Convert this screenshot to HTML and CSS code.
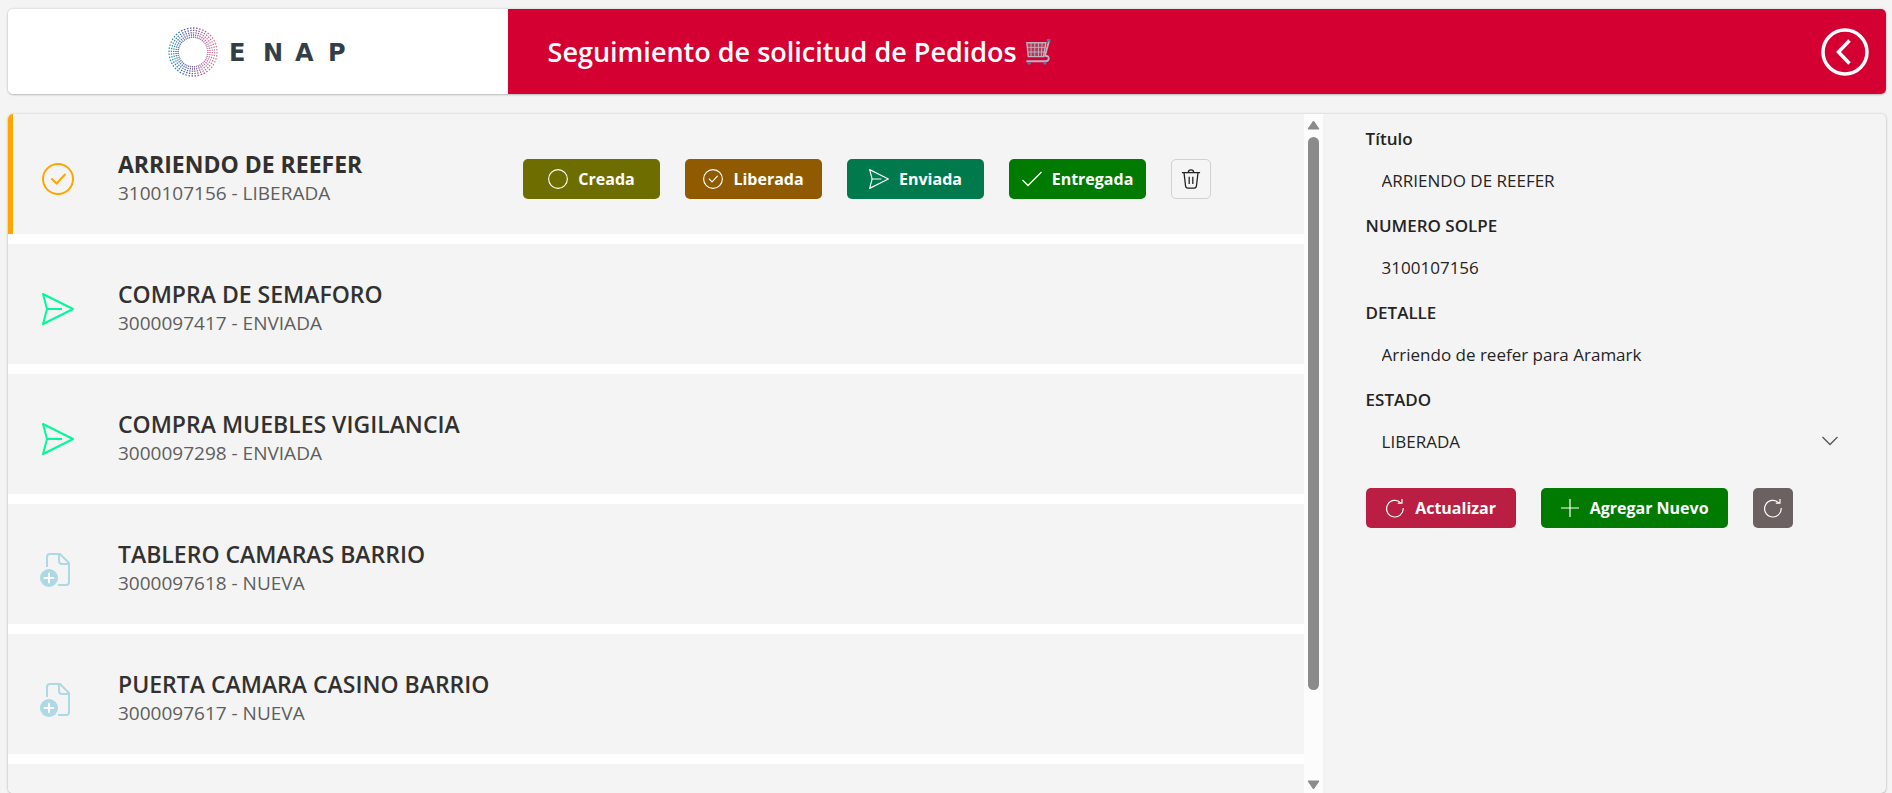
FILE: index.html
```html
<!DOCTYPE html>
<html lang="es">
<head>
<meta charset="utf-8">
<title>Seguimiento de solicitud de Pedidos</title>
<link rel="stylesheet" href="styles.css">
</head>
<body>
<svg class="sprite" aria-hidden="true">
  <symbol id="check-circle" viewBox="0 0 32 32"><g fill="none" stroke="currentColor" stroke-width="var(--sw)"><circle cx="16" cy="16" r="15"/><path d="M10 16l4.500 4.500L23 11.500" stroke-linecap="round" stroke-linejoin="round"/></g></symbol>
  <symbol id="send" viewBox="0 0 32 32"><path d="M1 1L31 16L1 31L5 16ZM5 16H20" fill="none" stroke="currentColor" stroke-width="var(--sw)" stroke-linejoin="round"/></symbol>
  <symbol id="file-add" viewBox="0 0 32 36"><g fill="none" stroke="currentColor" stroke-width="2"><path d="M5 16V6Q5 3 8 3H18L27 12V31Q27 34 24 34H16"/><path d="M17 3V10Q17 13 20 13H27"/></g><circle cx="7" cy="27" r="9" fill="currentColor"/><path d="M7 22.500V31.500M2.500 27H11.500" stroke="#fff" stroke-width="2" stroke-linecap="round"/></symbol>
  <symbol id="refresh" viewBox="0 0 20 20"><g fill="none" stroke="currentColor" stroke-width="1.200"><path d="M15.800 4.800A8.300 8.300 0 1 0 18.200 10"/><path d="M12.800 5.200H17V1"/></g></symbol>
</svg>

<header class="topbar">
  <div class="brand">
    <svg class="logo" viewBox="0 0 181 52" role="img" aria-label="ENAP">
      <defs>
        <linearGradient id="ring" gradientUnits="userSpaceOnUse" x1="0" y1="0" x2="51" y2="0">
          <stop offset="0" stop-color="#2fa9a6"/><stop offset=".25" stop-color="#3f6fa8"/><stop offset=".5" stop-color="#6b5597"/><stop offset=".75" stop-color="#b9689f"/><stop offset="1" stop-color="#e08098"/>
        </linearGradient>
      </defs>
      <g fill="none" stroke="url(#ring)" stroke-width="1.300" stroke-dasharray="1 1">
        <circle cx="26" cy="26" r="14.800" pathLength="96" stroke-width="1.600"/>
        <circle cx="26" cy="26" r="17" pathLength="96" stroke-width="1.500"/>
        <circle cx="26" cy="26" r="19.300" pathLength="96"/>
        <circle cx="26" cy="26" r="21.600" pathLength="96"/>
        <circle cx="26" cy="26" r="24" pathLength="96"/>
      </g>
      <text class="logo-text" x="62 96 128 161" y="35">ENAP</text>
    </svg>
  </div>
  <div class="banner">
    <h1>Seguimiento de solicitud de Pedidos</h1>
    <svg class="cart" viewBox="0 0 28 28" fill="none" aria-hidden="true">
      <path d="M2 4H22.500L20 19H3.500Z" fill="#b43a56" stroke="#b9b4c0" stroke-width="1.500"/>
      <path d="M6.500 4V19M10.500 4V19M14.500 4V19M18.500 4L17.500 19M2.500 9H22M3 14H21" stroke="#b9b4c0"/>
      <path d="M26 1.500L21.500 18Q26 18 25.500 21.500Q25 24 22 24H1.500" stroke="#b9b4c0" stroke-width="2"/>
      <path d="M23.500 1.500H27.500" stroke="#3a7fc4" stroke-width="3"/><circle cx="4.500" cy="26" r="1.600" fill="#3a7fc4"/><circle cx="21.500" cy="26" r="1.600" fill="#3a7fc4"/>
    </svg>
    <button class="back" type="button" aria-label="Volver">
      <svg viewBox="0 0 48 48" fill="none" stroke="#fff" stroke-width="3.500"><circle cx="24" cy="24" r="22"/><path d="M28.500 12.500L17.500 24L28.500 35.500"/></svg>
    </button>
  </div>
</header>

<main class="panel">
  <section class="list-wrap">
    <ul class="list">
      <li class="item selected">
        <svg class="state liberada"><use href="#check-circle"/></svg>
        <div class="text"><h2>ARRIENDO DE REEFER</h2><p>3100107156 - LIBERADA</p></div>
        <div class="actions">
          <button class="btn olive" type="button"><svg class="ico" viewBox="0 0 32 32"><circle cx="16" cy="16" r="15" fill="none" stroke="currentColor" stroke-width="1.800"/></svg>Creada</button>
          <button class="btn brown" type="button"><svg class="ico"><use href="#check-circle"/></svg>Liberada</button>
          <button class="btn teal" type="button"><svg class="ico"><use href="#send"/></svg>Enviada</button>
          <button class="btn green" type="button"><svg class="ico" viewBox="0 0 20 20"><path d="M.5 11L6 16.500L19.500 3" fill="none" stroke="currentColor" stroke-width="1.300"/></svg>Entregada</button>
          <button class="btn trash" type="button" aria-label="Eliminar"><svg class="ico" viewBox="0 0 20 22" fill="none" stroke="#222" stroke-width="1.400"><path d="M0 4H20M7 4Q7 1 10 1T13 4M2.300 4L4 18.500Q4.200 21 6.500 21H13.500Q15.800 21 16 18.500L17.700 4M8 8.500V16.500M12 8.500V16.500"/></svg></button>
        </div>
      </li>
      <li class="item">
        <svg class="state enviada"><use href="#send"/></svg>
        <div class="text"><h2>COMPRA DE SEMAFORO</h2><p>3000097417 - ENVIADA</p></div>
      </li>
      <li class="item">
        <svg class="state enviada"><use href="#send"/></svg>
        <div class="text"><h2>COMPRA MUEBLES VIGILANCIA</h2><p>3000097298 - ENVIADA</p></div>
      </li>
      <li class="item">
        <svg class="state nueva"><use href="#file-add"/></svg>
        <div class="text"><h2>TABLERO CAMARAS BARRIO</h2><p>3000097618 - NUEVA</p></div>
      </li>
      <li class="item">
        <svg class="state nueva"><use href="#file-add"/></svg>
        <div class="text"><h2>PUERTA CAMARA CASINO BARRIO</h2><p>3000097617 - NUEVA</p></div>
      </li>
      <li class="item"></li>
    </ul>
    <div class="scrollbar" aria-hidden="true">
      <svg class="arrow" viewBox="0 0 13 10"><path d="M6.500 1L12 9H1Z"/></svg>
      <div class="track"><div class="thumb"></div></div>
      <svg class="arrow" viewBox="0 0 13 10"><path d="M6.500 9L12 1H1Z"/></svg>
    </div>
  </section>

  <form class="detail">
    <div class="field"><label for="titulo">Título</label><input id="titulo" type="text" value="ARRIENDO DE REEFER"></div>
    <div class="field"><label for="solpe">NUMERO SOLPE</label><input id="solpe" type="text" value="3100107156"></div>
    <div class="field"><label for="detalle">DETALLE</label><input id="detalle" type="text" value="Arriendo de reefer para Aramark"></div>
    <div class="field"><label for="estado">ESTADO</label>
      <div class="select"><select id="estado"><option>LIBERADA</option></select>
        <svg class="chevron" viewBox="0 0 16 10"><path d="M.5 1L8 8.500L15.500 1" fill="none" stroke="#555" stroke-width="1.300"/></svg></div>
    </div>
    <div class="buttons">
      <button class="btn update" type="button"><svg class="ico"><use href="#refresh"/></svg>Actualizar</button>
      <button class="btn add" type="button"><svg class="ico" viewBox="0 0 20 20"><path d="M10 1V19M1 10H19" stroke="currentColor" stroke-width="1.200"/></svg>Agregar Nuevo</button>
      <button class="btn reload" type="button" aria-label="Recargar"><svg class="ico"><use href="#refresh"/></svg></button>
    </div>
  </form>
</main>
</body>
</html>
```
FILE: styles.css
```css
* { box-sizing: border-box; }
body {
  margin: 0;
  height: 100vh;
  padding: 9px 6px 0 8px;
  display: flex;
  flex-direction: column;
  gap: 20px;
  overflow: hidden;
  background: #f4f4f4;
  color: #242424;
  font-family: "Segoe UI", "Open Sans", "Noto Sans", sans-serif;
}
h1, h2, p, ul { margin: 0; padding: 0; }
button, input, select { font: inherit; color: inherit; }
.sprite { position: absolute; width: 0; height: 0; }
symbol, .state { overflow: visible; }

.topbar, .panel {
  display: flex;
  border-radius: 5px;
  overflow: hidden;
  box-shadow: 0 0 3px rgba(0, 0, 0, .16), 0 1px 2px rgba(0, 0, 0, .18);
}
.topbar { flex: none; }
.brand {
  flex: 0 0 26.6%;
  display: flex;
  align-items: center;
  justify-content: center;
  background: #fff;
}
.logo { width: 181px; height: 52px; }
.logo-text { font: bold 24px "DejaVu Sans", sans-serif; fill: #333f48; }
.banner {
  flex: 1;
  display: flex;
  align-items: center;
  gap: 8px;
  padding: 19px 17px 18px 40px;
  background: #d50032;
  color: #fff;
}
.banner h1 { font-size: 27px; font-weight: 600; line-height: 36px; }
.cart { width: 26px; height: 26px; }
.back {
  margin-left: auto;
  padding: 0;
  border: 0;
  background: none;
  height: 48px;
}
.back svg { width: 48px; height: 48px; display: block; }

.panel { flex: 1; min-height: 0; background: #f4f4f4; }
.list-wrap { flex: 0 0 70%; display: flex; min-height: 0; }
.list {
  flex: 1;
  overflow: hidden;
  list-style: none;
  display: flex;
  flex-direction: column;
  gap: 10px;
  background: #fff;
}
.item {
  flex: none;
  height: 120px;
  display: grid;
  grid-template-columns: 32px 361px auto;
  column-gap: 44px;
  align-items: center;
  justify-content: start;
  padding: 10px 29px 0;
  border-left: 5px solid #f4f4f4;
  background: #f4f4f4;
}
.item.selected { border-left-color: #ffa500; }
.state { width: 32px; height: 32px; --sw: 2; }
.state.liberada { color: #ffa500; }
.state.enviada { color: #00fa9a; }
.state.nueva { color: #add8e6; height: 36px; }
.text { white-space: nowrap; }
.text h2 { font-size: 23px; font-weight: 600; line-height: 29px; color: #323130; }
.text p { font-size: 19px; line-height: 29px; color: #605e5c; }
.selected h2 { font-weight: 700; }
.selected p { font-weight: 500; }

.actions, .buttons { display: flex; gap: 25px; }
.btn {
  height: 40px;
  display: flex;
  align-items: center;
  justify-content: center;
  gap: 10px;
  padding: 0;
  border: 0;
  border-radius: 5px;
  color: #fff;
  font-size: 16px;
  font-weight: 700;
  white-space: nowrap;
}
.ico { width: 20px; height: 20px; flex: none; --sw: 1.8; }
.actions .btn { width: 137px; }
.olive { background: #6e6e00; }
.brown { background: #8f5a00; }
.teal { background: #007a4d; }
.green, .add { background: #007a00; }
.actions .trash { width: 40px; border: 1px solid #d1d1d1; background: #f5f5f5; }

.scrollbar {
  flex: 0 0 19px;
  display: flex;
  flex-direction: column;
  align-items: center;
  gap: 7px;
  padding: 6px 0 3px;
  background: #fcfcfc;
}
.arrow { width: 13px; height: 10px; flex: none; fill: #8b8b8b; stroke: #8b8b8b; stroke-linejoin: round; }
.track { flex: 1; width: 11px; }
.thumb { height: 87%; border-radius: 6px; background: #8b8b8b; }

.detail {
  flex: 1;
  display: flex;
  flex-direction: column;
  gap: 14px;
  padding: 13px 43px;
}
.field { display: flex; flex-direction: column; gap: 9px; }
.field label { font-size: 17px; font-weight: 600; line-height: 24px; }
.field input, .field select {
  width: 100%;
  height: 40px;
  padding: 0 16px;
  border: 0;
  outline: 0;
  background: transparent;
  appearance: none;
  font-size: 17px;
}
.select { display: grid; align-items: center; }
.select select, .chevron { grid-area: 1 / 1; }
.chevron { width: 16px; height: 10px; justify-self: end; margin-right: 5px; pointer-events: none; }
.buttons { margin-top: 13px; }
.update { width: 150px; background: #ba1f43; }
.add { width: 187px; }
.reload { width: 40px; background: #6b6160; }
```
